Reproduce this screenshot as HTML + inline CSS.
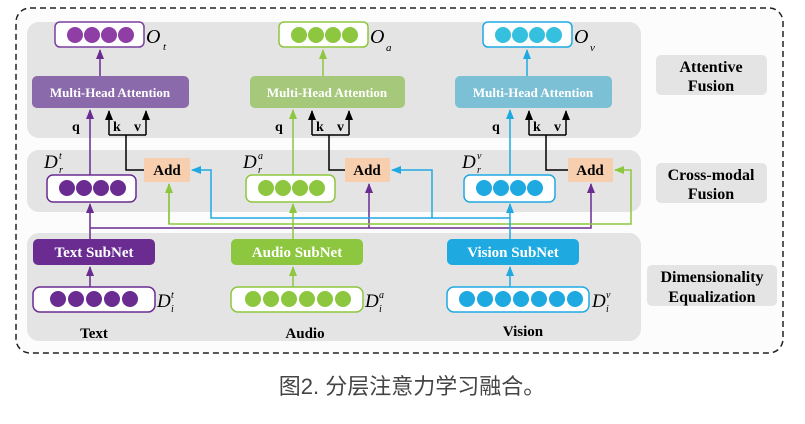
<!DOCTYPE html>
<html><head><meta charset="utf-8"><style>
html,body{margin:0;padding:0;background:#fff;width:805px;height:424px;overflow:hidden}
svg{display:block}
.b{font-family:"Liberation Serif",serif;font-weight:bold}
.i{font-family:"Liberation Serif",serif;font-style:italic}
</style></head><body>
<svg width="805" height="424" viewBox="0 0 805 424" xmlns="http://www.w3.org/2000/svg">
<defs>
<marker id="mp" markerWidth="10" markerHeight="10" refX="9" refY="5" orient="auto" markerUnits="userSpaceOnUse"><path d="M0,1 L10,5 L0,9 z" fill="#6a2c91"/></marker>
<marker id="mg" markerWidth="10" markerHeight="10" refX="9" refY="5" orient="auto" markerUnits="userSpaceOnUse"><path d="M0,1 L10,5 L0,9 z" fill="#8dc63f"/></marker>
<marker id="mb" markerWidth="10" markerHeight="10" refX="9" refY="5" orient="auto" markerUnits="userSpaceOnUse"><path d="M0,1 L10,5 L0,9 z" fill="#1ea9e1"/></marker>
<marker id="mk" markerWidth="10" markerHeight="10" refX="9" refY="5" orient="auto" markerUnits="userSpaceOnUse"><path d="M0,1 L10,5 L0,9 z" fill="#000"/></marker>
</defs>
<rect x="16" y="8" width="767" height="345" rx="14" fill="#fcfcfc" stroke="#222" stroke-width="1.5" stroke-dasharray="6,4"/>
<rect x="27" y="22" width="614" height="116" rx="12" fill="#e4e4e4"/>
<rect x="27" y="150" width="614" height="62" rx="12" fill="#e4e4e4"/>
<rect x="27" y="233" width="614" height="108" rx="12" fill="#e4e4e4"/>
<rect x="656" y="55" width="111" height="40" rx="5" fill="#e4e4e4"/>
<text x="711" y="72" class="b" font-size="16" text-anchor="middle">Attentive</text>
<text x="711" y="91" class="b" font-size="16" text-anchor="middle">Fusion</text>
<rect x="656" y="163" width="111" height="40" rx="5" fill="#e4e4e4"/>
<text x="711" y="180" class="b" font-size="16" text-anchor="middle">Cross-modal</text>
<text x="711" y="199" class="b" font-size="16" text-anchor="middle">Fusion</text>
<rect x="647" y="265" width="130" height="41" rx="5" fill="#e4e4e4"/>
<text x="712" y="282" class="b" font-size="16" text-anchor="middle">Dimensionality</text>
<text x="712" y="302" class="b" font-size="16" text-anchor="middle">Equalization</text>

<g fill="none" stroke-width="1.5">
<path d="M90,228 H591 V184" stroke="#6a2c91" marker-end="url(#mp)"/>
<path d="M369,228 V184" stroke="#6a2c91" marker-end="url(#mp)"/>
<path d="M169,184 V224 H631 V170 H615" stroke="#8dc63f" marker-end="url(#mg)"/>
<path d="M169,224 V184" stroke="#8dc63f" marker-end="url(#mg)"/>
<path d="M510,218 H211 V170 H192" stroke="#1ea9e1" marker-end="url(#mb)"/>
<path d="M432,218 V170 H392" stroke="#1ea9e1" marker-end="url(#mb)"/>
<path d="M90,287 V267" stroke="#6a2c91" marker-end="url(#mp)"/>
<path d="M90,239 V204" stroke="#6a2c91" marker-end="url(#mp)"/>
<path d="M90,175 V110" stroke="#6a2c91" marker-end="url(#mp)"/>
<path d="M100,76 V50" stroke="#6a2c91" marker-end="url(#mp)"/>
<path d="M293,287 V267" stroke="#8dc63f" marker-end="url(#mg)"/>
<path d="M293,239 V204" stroke="#8dc63f" marker-end="url(#mg)"/>
<path d="M293,175 V110" stroke="#8dc63f" marker-end="url(#mg)"/>
<path d="M323,76 V50" stroke="#8dc63f" marker-end="url(#mg)"/>
<path d="M510,287 V267" stroke="#1ea9e1" marker-end="url(#mb)"/>
<path d="M510,239 V204" stroke="#1ea9e1" marker-end="url(#mb)"/>
<path d="M510,175 V110" stroke="#1ea9e1" marker-end="url(#mb)"/>
<path d="M527,76 V50" stroke="#1ea9e1" marker-end="url(#mb)"/>
<path d="M144,170 H126 V135 M109,135 H146" stroke="#000"/>
<path d="M109,135 V111" stroke="#000" marker-end="url(#mk)"/>
<path d="M146,135 V111" stroke="#000" marker-end="url(#mk)"/>
<path d="M345,170 H329 V135 M312,135 H349" stroke="#000"/>
<path d="M312,135 V111" stroke="#000" marker-end="url(#mk)"/>
<path d="M349,135 V111" stroke="#000" marker-end="url(#mk)"/>
<path d="M568,170 H546 V135 M529,135 H566" stroke="#000"/>
<path d="M529,135 V111" stroke="#000" marker-end="url(#mk)"/>
<path d="M566,135 V111" stroke="#000" marker-end="url(#mk)"/>
</g>
<g class="b" font-size="14">
<text x="72" y="131">q</text><text x="113" y="131">k</text><text x="134" y="131">v</text>
<text x="275" y="131">q</text><text x="316" y="131">k</text><text x="337" y="131">v</text>
<text x="492" y="131">q</text><text x="533" y="131">k</text><text x="554" y="131">v</text>
</g>

<rect x="55" y="22" width="89" height="25" rx="5" fill="#fff" stroke="#7a3ea0" stroke-width="1.5"/>
<g fill="#8e3ea5"><circle cx="75" cy="35" r="8"/><circle cx="92" cy="35" r="8"/><circle cx="109" cy="35" r="8"/><circle cx="126" cy="35" r="8"/></g>
<rect x="279" y="22" width="89" height="25" rx="5" fill="#fff" stroke="#8dc63f" stroke-width="1.5"/>
<g fill="#8dc63f"><circle cx="299" cy="35" r="8"/><circle cx="316" cy="35" r="8"/><circle cx="333" cy="35" r="8"/><circle cx="350" cy="35" r="8"/></g>
<rect x="483" y="22" width="89" height="25" rx="5" fill="#fff" stroke="#1ea9e1" stroke-width="1.5"/>
<g fill="#36c0df"><circle cx="503" cy="35" r="8"/><circle cx="520" cy="35" r="8"/><circle cx="537" cy="35" r="8"/><circle cx="554" cy="35" r="8"/></g>
<g class="i" font-size="20"><text x="146" y="43">O</text><text x="370" y="43">O</text><text x="574" y="43">O</text></g>
<g class="i" font-size="11"><text x="163" y="50">t</text><text x="386" y="51">a</text><text x="590" y="51">v</text></g>

<rect x="32" y="76" width="157" height="32" rx="5" fill="#8b6aab"/>
<rect x="250" y="76" width="155" height="32" rx="5" fill="#a5c87a"/>
<rect x="455" y="76" width="157" height="32" rx="5" fill="#7cc0d6"/>
<g class="b" font-size="13" fill="#fff" text-anchor="middle">
<text x="110" y="97">Multi-Head Attention</text>
<text x="327" y="97">Multi-Head Attention</text>
<text x="533" y="97">Multi-Head Attention</text>
</g>

<g fill="#f8cfae"><rect x="144" y="158" width="46" height="24"/><rect x="345" y="158" width="45" height="24"/><rect x="568" y="158" width="45" height="24"/></g>
<g class="b" font-size="15" text-anchor="middle"><text x="167" y="175">Add</text><text x="367" y="175">Add</text><text x="590" y="175">Add</text></g>

<rect x="47" y="175" width="89" height="27" rx="6" fill="#fff" stroke="#6a2c91" stroke-width="1.5"/>
<g fill="#6a2c91"><circle cx="67" cy="188" r="8"/><circle cx="84" cy="188" r="8"/><circle cx="101" cy="188" r="8"/><circle cx="118" cy="188" r="8"/></g>
<rect x="246" y="175" width="89" height="27" rx="6" fill="#fff" stroke="#8dc63f" stroke-width="1.5"/>
<g fill="#8dc63f"><circle cx="266" cy="188" r="8"/><circle cx="283" cy="188" r="8"/><circle cx="300" cy="188" r="8"/><circle cx="317" cy="188" r="8"/></g>
<rect x="464" y="175" width="91" height="27" rx="6" fill="#fff" stroke="#1ea9e1" stroke-width="1.5"/>
<g fill="#1ea9e1"><circle cx="484" cy="188" r="8"/><circle cx="501" cy="188" r="8"/><circle cx="518" cy="188" r="8"/><circle cx="535" cy="188" r="8"/></g>
<g class="i" font-size="19"><text x="44" y="168">D</text><text x="243" y="168">D</text><text x="462" y="168">D</text></g>
<g class="i" font-size="10"><text x="59" y="159">t</text><text x="59" y="173">r</text><text x="258" y="159">a</text><text x="258" y="173">r</text><text x="477" y="159">v</text><text x="477" y="173">r</text></g>

<rect x="33" y="239" width="122" height="26" rx="5" fill="#6a2c91"/>
<rect x="231" y="239" width="132" height="26" rx="5" fill="#8dc63f"/>
<rect x="447" y="239" width="132" height="26" rx="5" fill="#1ea9e1"/>
<g class="b" font-size="15" fill="#fff" text-anchor="middle">
<text x="94" y="257">Text SubNet</text><text x="297" y="257">Audio SubNet</text><text x="513" y="257">Vision SubNet</text>
</g>

<rect x="33" y="287" width="122" height="25" rx="7" fill="#fff" stroke="#6a2c91" stroke-width="1.5"/>
<g fill="#6a2c91"><circle cx="58" cy="299" r="8"/><circle cx="76" cy="299" r="8"/><circle cx="94" cy="299" r="8"/><circle cx="112" cy="299" r="8"/><circle cx="130" cy="299" r="8"/></g>
<rect x="231" y="287" width="132" height="25" rx="7" fill="#fff" stroke="#8dc63f" stroke-width="1.5"/>
<g fill="#8dc63f"><circle cx="253" cy="299" r="8"/><circle cx="271" cy="299" r="8"/><circle cx="289" cy="299" r="8"/><circle cx="307" cy="299" r="8"/><circle cx="325" cy="299" r="8"/><circle cx="343" cy="299" r="8"/></g>
<rect x="447" y="287" width="142" height="25" rx="7" fill="#fff" stroke="#1ea9e1" stroke-width="1.5"/>
<g fill="#1ea9e1"><circle cx="467" cy="299" r="8"/><circle cx="485" cy="299" r="8"/><circle cx="503" cy="299" r="8"/><circle cx="521" cy="299" r="8"/><circle cx="539" cy="299" r="8"/><circle cx="557" cy="299" r="8"/><circle cx="575" cy="299" r="8"/></g>
<g class="i" font-size="19"><text x="157" y="307">D</text><text x="365" y="307">D</text><text x="592" y="307">D</text></g>
<g class="i" font-size="10"><text x="171" y="298">t</text><text x="171" y="312">i</text><text x="379" y="298">a</text><text x="379" y="312">i</text><text x="606" y="298">v</text><text x="606" y="312">i</text></g>

<g class="b" font-size="15" text-anchor="middle"><text x="94" y="338">Text</text><text x="305" y="338">Audio</text><text x="523" y="336">Vision</text></g>

<text x="412" y="394" text-anchor="middle" font-family="'Liberation Sans','Noto Sans CJK SC',sans-serif" font-size="22" fill="#444">图2. 分层注意力学习融合。</text>
</svg>
</body></html>
